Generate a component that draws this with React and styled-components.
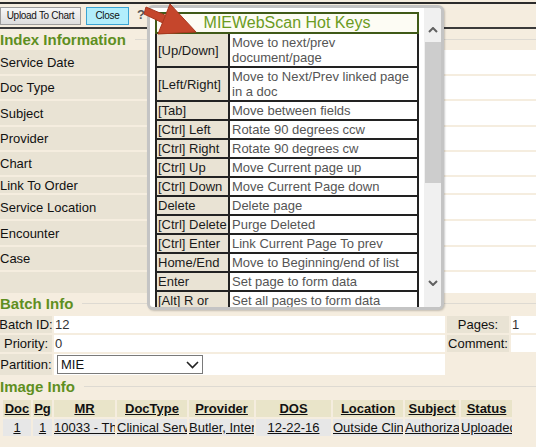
import React from 'react'
import styled, { createGlobalStyle } from 'styled-components'

const GlobalStyle = createGlobalStyle`
  html, body { margin:0; padding:0; background:#f5eddf; }
  body { font-family: Arial, "Liberation Sans", sans-serif; font-size:13px; color:#111; }
  * { box-sizing:border-box; }
`

const Page = styled.div`
  position:relative;
  width:536px;
  height:447px;
  overflow:hidden;
  padding-top:2px;
`

const Toolbar = styled.div`
  display:flex;
  align-items:center;
  height:27px;
  border-top:2px solid #2b2b2b;
  border-bottom:2px solid #3a3a3a;
`

const ToolButton = styled.button`
  height:18px;
  width:${({w})=>w}px;
  margin-left:${({ml})=>ml||0}px;
  padding:0;
  font-family:Arial, "Liberation Sans", sans-serif;
  font-size:10px;
  letter-spacing:-0.3px;
  color:#111;
  border:1px solid ${({primary})=>primary?"#3ba4d4":"#9c9c9c"};
  background:${({primary})=>primary?"#b2eefc":"linear-gradient(#f7f7f7,#dddddd)"};
  border-radius:0;
`

const Help = styled.span`
  margin-left:8px;
  font-weight:bold;
  font-size:13px;
  color:#555;
  margin-top:-3px;
`

const SectionHeading = styled.div`
  display:flex;
  align-items:center;
  height:21px;
  margin-top:${({mt})=>mt||0}px;
  color:#5f8f1f;
  font-weight:bold;
  font-size:15px;
  white-space:nowrap;
  &::after{
    content:'';
    flex:1;
    height:1px;
    background:#dedad2;
    margin-left:9px;
  }
`

const FieldGrid = styled.div`
  display:grid;
  grid-template-columns:150px 1fr;
  gap:2px;
`

const FieldLabel = styled.div`
  height:${({h})=>h}px;
  background:#e9e3d4;
  display:flex;
  align-items:center;
  white-space:nowrap;
`

const FieldValue = styled.div`
  height:${({h})=>h}px;
  background:#fff;
`

const BatchGrid = styled.div`
  display:grid;
  grid-template-columns:52px 391px 62px 25px;
  grid-template-rows:17px 17px 21px;
  gap:2px;
  margin-top:2px;
`

const BatchLabel = styled.div`
  background:#e9e3d4;
  display:flex;
  align-items:center;
  justify-content:center;
  white-space:nowrap;
`

const BatchValue = styled.div`
  background:#fff;
  display:flex;
  align-items:center;
  padding-left:1px;
  color:#333;
`

const FakeSelect = styled.div`
  margin-left:2px;
  width:146px;
  height:19px;
  border:1px solid #7a7a7a;
  background:#fff;
  display:flex;
  align-items:center;
  justify-content:space-between;
  padding:0 3px 0 3px;
  color:#111;
`

const ImageGrid = styled.div`
  display:grid;
  grid-template-columns:${({cols})=>cols};
  grid-auto-rows:17px;
  gap:2px;
  padding-left:3px;
  margin-top:3px;
`

const HeadCell = styled.div`
  background:#e9e4c9;
  font-weight:bold;
  text-decoration:underline;
  text-align:center;
  line-height:17px;
  white-space:nowrap;
  overflow:hidden;
`

const DataCell = styled.div`
  background:#e7e7e7;
  text-decoration:underline;
  text-align:center;
  line-height:17px;
  white-space:nowrap;
  overflow:hidden;
`

const Popup = styled.div`
  position:absolute;
  left:147px;
  top:5px;
  width:297px;
  height:305px;
  border:3px solid #c4c4c4;
  border-radius:6px;
  background:#fff;
  box-shadow:1px 1px 2px rgba(0,0,0,0.2);
  display:flex;
  overflow:hidden;
`

const PopupBody = styled.div`
  flex:1;
  padding:4px 0 0 5px;
  overflow:hidden;
`

const HotKeyGrid = styled.div`
  display:grid;
  grid-template-columns:75px 189px;
  width:264px;
`

const HotKeyTitle = styled.div`
  grid-column:1 / -1;
  height:22px;
  border:2px solid #405a18;
  background:#fdfcf4;
  color:#6b9b22;
  font-size:16px;
  line-height:18px;
  text-align:center;
`

const KeyCell = styled.div`
  border:2px solid #222;
  border-top:0;
  background:#e9e3d4;
  padding:1px 0 1px 1px;
  line-height:15px;
  display:flex;
  align-items:center;
  white-space:nowrap;
  color:#1a1a1a;
`

const DescCell = styled.div`
  border-right:2px solid #222;
  border-bottom:2px solid #222;
  background:#fff;
  padding:1px 0 1px 2px;
  line-height:15px;
  white-space:nowrap;
  overflow:hidden;
  color:#555;
`

const ScrollTrack = styled.div`
  width:17px;
  background:#f0f0f0;
  display:flex;
  flex-direction:column;
`

const ScrollButton = styled.div`
  height:34px;
  display:flex;
  justify-content:center;
  padding-top:${({pt})=>pt}px;
`

const ScrollThumb = styled.div`
  height:141px;
  margin-left:1px;
  background:#cdcdcd;
`

const ScrollGap = styled.div`
  flex:1;
`

const Arrow = styled.svg`
  position:absolute;
  left:136px;
  top:0;
`

const fields = [
  ["Service Date",24],["Doc Type",23],["Subject",24],["Provider",23],["Chart",23],
  ["Link To Order",16],["Service Location",24],["Encounter",24],["Case",23],["",21],
]

const hotKeys = [
  ["[Up/Down]",["Move to next/prev","document/page"]],
  ["[Left/Right]",["Move to Next/Prev linked page","in a doc"]],
  ["[Tab]",["Move between fields"]],
  ["[Ctrl] Left",["Rotate 90 degrees ccw"]],
  ["[Ctrl] Right",["Rotate 90 degrees cw"]],
  ["[Ctrl] Up",["Move Current page up"]],
  ["[Ctrl] Down",["Move Current Page down"]],
  ["Delete",["Delete page"]],
  ["[Ctrl] Delete",["Purge Deleted"]],
  ["[Ctrl] Enter",["Link Current Page To prev"]],
  ["Home/End",["Move to Beginning/end of list"]],
  ["Enter",["Set page to form data"]],
  ["[Alt] R or",["Set all pages to form data"]],
]

const imageCols = [["Doc",28],["Pg",19],["MR",61],["DocType",70],["Provider",65],["DOS",75],["Location",70],["Subject",54],["Status",51]]
const imageRow = ["1","1","10033 - Thompson, Ann","Clinical Services","Butler, Internal Med","12-22-16","Outside Clinic","Authorization","Uploaded"]

const Chevron = ({down}) => (
  <svg width="10" height="6" viewBox="0 0 10 6">
    <polyline points={down?"1,1 5,5 9,1":"1,5 5,1 9,5"} fill="none" stroke="#606060" strokeWidth="2"/>
  </svg>
)

const App = () => {
  return (
    <Page>
      <GlobalStyle/>
      <Toolbar>
        <ToolButton w={81}>Upload To Chart</ToolButton>
        <ToolButton w={43} ml={5} primary>Close</ToolButton>
        <Help>?</Help>
      </Toolbar>

      <SectionHeading>Index Information</SectionHeading>
      <FieldGrid>
        {fields.map(([label,h],i)=>(
          <React.Fragment key={i}>
            <FieldLabel h={h}>{label}</FieldLabel>
            <FieldValue h={h}/>
          </React.Fragment>
        ))}
      </FieldGrid>

      <SectionHeading>Batch Info</SectionHeading>
      <BatchGrid>
        <BatchLabel>Batch ID:</BatchLabel>
        <BatchValue>12</BatchValue>
        <BatchLabel>Pages:</BatchLabel>
        <BatchValue>1</BatchValue>
        <BatchLabel>Priority:</BatchLabel>
        <BatchValue>0</BatchValue>
        <BatchLabel>Comment:</BatchLabel>
        <BatchValue/>
        <BatchLabel>Partition:</BatchLabel>
        <BatchValue>
          <FakeSelect>
            <span>MIE</span>
            <svg width="13" height="8" viewBox="0 0 13 8">
              <polyline points="1,1 6.5,6.5 12,1" fill="none" stroke="#222" strokeWidth="1.6"/>
            </svg>
          </FakeSelect>
        </BatchValue>
      </BatchGrid>

      <SectionHeading mt={1}>Image Info</SectionHeading>
      <ImageGrid cols={imageCols.map(c=>c[1]+"px").join(" ")}>
        {imageCols.map(([name])=>(<HeadCell key={name}>{name}</HeadCell>))}
        {imageRow.map((v,i)=>(<DataCell key={i}>{v}</DataCell>))}
      </ImageGrid>

      <Popup>
        <PopupBody>
          <HotKeyGrid>
            <HotKeyTitle>MIEWebScan Hot Keys</HotKeyTitle>
            {hotKeys.map(([key,lines])=>(
              <React.Fragment key={key}>
                <KeyCell>{key}</KeyCell>
                <DescCell>{lines.map((l,i)=>(<div key={i}>{l}</div>))}</DescCell>
              </React.Fragment>
            ))}
          </HotKeyGrid>
        </PopupBody>
        <ScrollTrack>
          <ScrollButton pt={19}><Chevron/></ScrollButton>
          <ScrollThumb/>
          <ScrollGap/>
          <ScrollButton pt={7}><Chevron down/></ScrollButton>
        </ScrollTrack>
      </Popup>

      <Arrow width="70" height="40" viewBox="0 0 70 40">
        <polygon points="10,7 31,16 28,23.5 8,14" fill="#c5462c" stroke="#a8381f" strokeWidth="1"/>
        <polygon points="34,4 60,32 22,34" fill="#c5462c" stroke="#a8381f" strokeWidth="1"/>
      </Arrow>
    </Page>
  )
}

export default App
